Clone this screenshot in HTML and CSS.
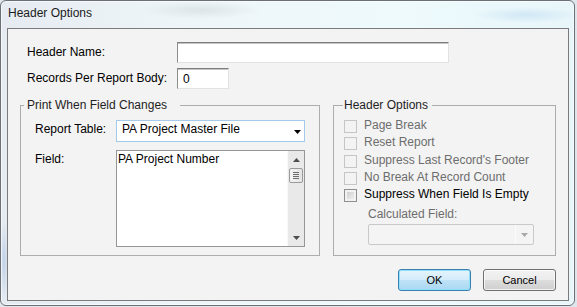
FILE: index.html
```html
<!DOCTYPE html>
<html lang="en">
<head>
    <meta charset="UTF-8">
    <title>Header Options</title>
    <link rel="stylesheet" href="styles.css">
</head>
<body>

<div class="window">
    <div class="titlebar">Header Options</div>

    <div class="client">
        <div class="row">
            <label>Header Name:</label>
            <input type="text" class="text wide">
        </div>
        <div class="row">
            <label>Records Per Report Body:</label>
            <input type="text" class="text short" value="0">
        </div>

        <div class="groups">
            <fieldset class="group group-print">
                <legend>Print When Field Changes</legend>
                <div class="frow">
                    <span class="lbl">Report Table:</span>
                    <div class="combo">
                        <span>PA Project Master File</span>
                        <svg class="arrow" width="7" height="4" viewBox="0 0 7 4"><path d="M0 0H7L3.5 4Z" fill="#000"/></svg>
                    </div>
                </div>
                <div class="frow">
                    <span class="lbl">Field:</span>
                    <div class="listbox">
                        <div class="list-items">PA Project Number</div>
                        <div class="scrollbar">
                            <div class="sb-btn">
                                <svg width="7" height="4" viewBox="0 0 7 4"><path d="M0 4H7L3.5 0Z" fill="#4d4d4d"/></svg>
                            </div>
                            <div class="sb-thumb">
                                <i></i><i></i><i></i><i></i>
                            </div>
                            <div class="sb-track"></div>
                            <div class="sb-btn">
                                <svg width="7" height="4" viewBox="0 0 7 4"><path d="M0 0H7L3.5 4Z" fill="#4d4d4d"/></svg>
                            </div>
                        </div>
                    </div>
                </div>
            </fieldset>

            <fieldset class="group group-options">
                <legend>Header Options</legend>
                <div class="opt disabled"><span class="check"></span><span>Page Break</span></div>
                <div class="opt disabled"><span class="check"></span><span>Reset Report</span></div>
                <div class="opt disabled"><span class="check"></span><span>Suppress Last Record's Footer</span></div>
                <div class="opt disabled"><span class="check"></span><span>No Break At Record Count</span></div>
                <div class="opt"><span class="check"></span><span>Suppress When Field Is Empty</span></div>
                <div class="calc">
                    <div class="calc-label">Calculated Field:</div>
                    <div class="calc-combo">
                        <span class="calc-arrow">
                            <svg width="7" height="4" viewBox="0 0 7 4"><path d="M0 0H7L3.5 4Z" fill="#a8a8a8"/></svg>
                        </span>
                    </div>
                </div>
            </fieldset>
        </div>

        <div class="buttons">
            <button class="btn default">OK</button>
            <button class="btn">Cancel</button>
        </div>
    </div>
</div>

</body>
</html>
```

FILE: styles.css
```css
* {
    box-sizing: border-box;
}
body {
    margin: 0;
    background-color: #dfe7ec;
    font-family: "Liberation Sans", Arial, sans-serif;
    font-size: 12px;
    color: #000;
}
.window {
    width: 575px;
    height: 306px;
    padding: 0 5px 4px 6px;
    border: 1px solid #6b7076;
    border-radius: 6px;
    box-shadow: inset 0 0 0 1px rgba(255, 255, 255, 0.6);
    background:
        radial-gradient(ellipse 60px 9px at 200px 9px, rgba(140, 150, 160, 0.18), transparent),
        radial-gradient(ellipse 55px 8px at 525px 14px, rgba(120, 175, 225, 0.22), transparent),
        radial-gradient(ellipse 5px 40px at 3px 260px, rgba(110, 150, 210, 0.3), transparent),
        linear-gradient(to right, #e5ebf1 0%, #eef5f8 30%, #eefafc 70%, #e8f6fa 100%);
}
.titlebar {
    height: 27px;
    line-height: 25px;
    padding-left: 1px;
    color: #1b1b1b;
}
.client {
    height: 273px;
    padding: 13px 12px 0 12px;
    border: 1px solid #7b7b7b;
    background-color: #f3f3f3;
}
.row {
    display: flex;
    height: 21px;
    padding-left: 7px;
}
.row + .row {
    margin-top: 5px;
}
.row label {
    width: 150px;
    line-height: 21px;
}
.text {
    height: 21px;
    padding: 0 5px;
    border: 1px solid;
    border-color: #7d7d7d #e2e2e2 #e2e2e2 #8d8d8d;
    box-shadow: inset 0 1px 0 #c4c4c4;
    background-color: #fff;
    font-family: inherit;
    font-size: 12px;
    color: #000;
    outline: none;
}
.wide {
    width: 272px;
}
.short {
    width: 52px;
}

/* group boxes */
.groups {
    display: flex;
    gap: 13px;
    margin-top: 9px;
}
.group {
    margin: 0;
    min-width: 0;
    border: 1px solid #adadad;
}
.group legend {
    line-height: 14px;
    color: #1e1e1e;
}
.group-print {
    width: 300px;
    padding: 8px 0 8px 14px;
}
.group-print legend {
    margin-left: -11px;
    padding: 0 13px 0 3px;
}
.group-options {
    width: 223px;
    padding: 8px 0 0 10px;
}
.group-options legend {
    margin-left: -1px;
    padding: 0 4px 0 1px;
}
.frow {
    display: flex;
}
.frow + .frow {
    margin-top: 8px;
}
.lbl {
    width: 81px;
    line-height: 18px;
}
.combo {
    display: flex;
    justify-content: space-between;
    width: 189px;
    height: 22px;
    padding: 0 3px 0 5px;
    border: 1px solid #a5c9ea;
    background-color: #fff;
    line-height: 17px;
}
.combo .arrow {
    margin-top: 9px;
}
.listbox {
    display: flex;
    width: 189px;
    height: 97px;
    border: 1px solid #969696;
    background-color: #fff;
}
.list-items {
    flex: 1;
    padding-left: 1px;
    line-height: 17px;
}
.scrollbar {
    display: flex;
    flex-direction: column;
    width: 17px;
    border-left: 1px solid #f8f8f8;
    background-color: #e9e9e9;
}
.sb-btn {
    display: flex;
    justify-content: center;
    align-items: center;
    height: 17px;
}
.sb-thumb {
    display: flex;
    flex-direction: column;
    justify-content: center;
    gap: 1px;
    height: 15px;
    margin: 0 1px;
    padding: 0 3px;
    border: 1px solid #9a9a9a;
    border-radius: 2px;
    background: linear-gradient(to right, #f4f4f4, #e4e4e4);
}
.sb-thumb i {
    display: block;
    height: 1px;
    background-color: #6e6e6e;
}
.sb-track {
    flex: 1;
}

/* header options */
.opt {
    display: flex;
    height: 17.25px;
}
.opt span:last-child {
    line-height: 13px;
    margin-top: -1px;
}
.check {
    width: 13px;
    height: 13px;
    margin-right: 7px;
    border: 1px solid #8e8f8f;
    background: linear-gradient(135deg, #c9c9c9, #f5f5f5);
    box-shadow: inset 0 0 0 2px #f2f2f2;
}
.opt.disabled {
    color: #6d6d6d;
}
.opt.disabled .check {
    border-color: #c6c6c6;
    background: #f3f3f3;
    box-shadow: none;
}
.calc {
    margin-left: 24px;
}
.calc-label {
    margin-top: 2px;
    line-height: 13px;
    color: #6d6d6d;
}
.calc-combo {
    display: flex;
    justify-content: flex-end;
    width: 166px;
    height: 21px;
    margin-top: 2.75px;
    border: 1px solid #c9c9c9;
    border-radius: 2px;
    background-color: #f4f4f4;
}
.calc-arrow {
    display: flex;
    justify-content: center;
    align-items: center;
    width: 18px;
    border-left: 1px solid #fbfbfb;
}

/* buttons */
.buttons {
    display: flex;
    justify-content: flex-end;
    gap: 12px;
    margin-top: 13px;
}
.btn {
    width: 73px;
    height: 22px;
    padding: 0;
    border: 1px solid #707070;
    border-radius: 3px;
    background: linear-gradient(#f2f2f2 0%, #ebebeb 50%, #dddddd 50%, #cfcfcf 100%);
    box-shadow: inset 0 0 0 1px rgba(255, 255, 255, 0.7);
    font-family: inherit;
    font-size: 11px;
    line-height: 20px;
    color: #000;
}
.btn.default {
    border-color: #3c7fb1;
    background: linear-gradient(#e5f4fc 0%, #d3ecfa 50%, #bfe3f7 50%, #a9d7f1 100%);
    box-shadow: inset 0 0 0 1px #8ee0fb;
}
```
